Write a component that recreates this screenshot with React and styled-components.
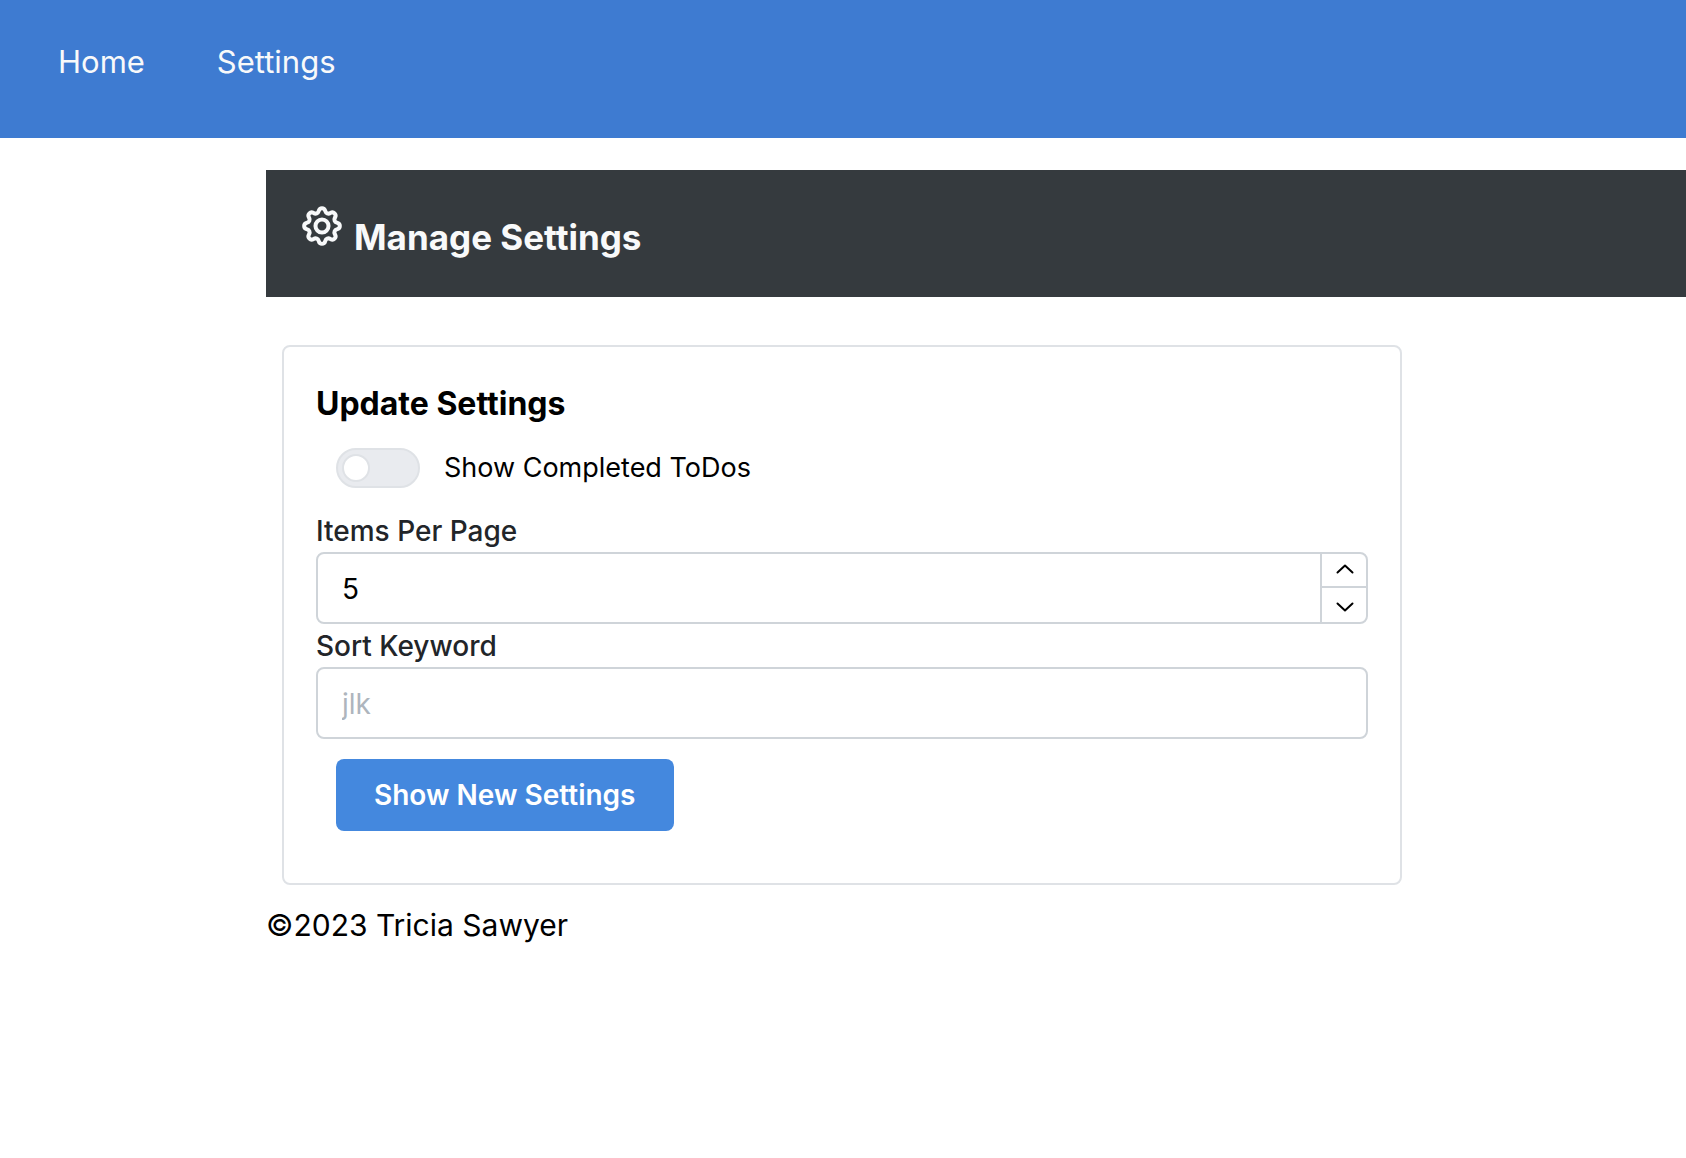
import React, { useState } from "react";
import styled, { createGlobalStyle } from "styled-components";
import { BsGear } from "react-icons/bs";

const GlobalStyle = createGlobalStyle`
  *, *::before, *::after { box-sizing: border-box; }
  body {
    margin: 0;
    background: #ffffff;
    color: #000000;
    font-family: Inter, "Liberation Sans", sans-serif;
    font-size: 30px;
    line-height: 48px;
  }
  button, input { font-family: inherit; }
`;

const Nav = styled.nav`
  display: flex;
  gap: 72px;
  padding: 38px 58px 52px;
  background: #3e7bd1;
  font-size: 31px;
`;

const NavLink = styled.a`
  color: #f8f9fa;
  text-decoration: none;
`;

const Page = styled.div`
  padding: 32px 0 32px 266px;
`;

const Banner = styled.header`
  display: flex;
  align-items: flex-start;
  gap: 12px;
  padding: 36px 36px 29px;
  background: #353a3e;
  color: #f8f9fa;
`;

const GearIcon = styled(BsGear)`
  width: 38px;
  height: 38px;
  margin: 1px;
  overflow: visible;
  stroke: currentColor;
  stroke-width: 0.7;
`;

const BannerTitle = styled.h1`
  margin: 0;
  font-size: 35px;
  font-weight: 700;
  line-height: 62px;
`;

const Card = styled.form`
  max-width: 1120px;
  margin: 48px 16px 16px;
  padding: 32px;
  border: 2px solid #dfe2e6;
  border-radius: 8px;
`;

const CardTitle = styled.h2`
  margin: 0;
  font-size: 32px;
  font-weight: 700;
  line-height: 50px;
`;

const SwitchRow = styled.div`
  display: flex;
  align-items: center;
  gap: 24px;
  margin: 19px 20px 21px;
  font-size: 27px;
  line-height: 40px;
`;

const Switch = styled.input`
  appearance: none;
  display: flex;
  align-items: center;
  width: 84px;
  height: 40px;
  margin: 0;
  padding: 0 4px;
  border: 2px solid #dfe2e6;
  border-radius: 20px;
  background: #e9ebef;

  &::before {
    content: "";
    width: 28px;
    height: 28px;
    border: 2px solid #dfe2e6;
    border-radius: 50%;
    background: #ffffff;
  }

  &:checked {
    justify-content: flex-end;
    border-color: #4488de;
    background: #4488de;
  }
`;

const Label = styled.label`
  display: block;
  padding-top: 1px;
  color: #222529;
  font-size: 28px;
  font-weight: 500;
  line-height: 42px;
`;

const Field = styled.div`
  display: flex;
  height: 72px;
  overflow: hidden;
  border: 2px solid #cfd4d9;
  border-radius: 8px;
`;

const Input = styled.input`
  flex: 1;
  min-width: 0;
  padding: 1px 24px 0;
  border: 0;
  outline: 0;
  background: transparent;
  color: #000000;
  font-size: 28px;
  appearance: textfield;

  &::placeholder { color: #aeb5bd; }
  &::-webkit-inner-spin-button { appearance: none; margin: 0; }
`;

const Stepper = styled.div`
  display: flex;
  flex-direction: column;
  width: 46px;
  border-left: 2px solid #cfd4d9;
`;

const StepButton = styled.button`
  display: flex;
  height: 34px;
  align-items: center;
  justify-content: center;
  padding: 3px 0 0 2px;
  border: 0;
  background: transparent;
  color: #000000;

  &:first-child {
    padding: 0 0 3px 2px;
    border-bottom: 2px solid #cfd4d9;
  }
`;

const SubmitButton = styled.button`
  display: block;
  height: 72px;
  margin: 20px;
  padding: 0 38px;
  border: 0;
  border-radius: 8px;
  background: #4488de;
  color: #ffffff;
  font-size: 28px;
  font-weight: 600;
`;

const Chevron = ({ up }) => (
  <svg width="18" height="10" viewBox="0 0 18 10" fill="none" stroke="currentColor" strokeWidth="2" strokeLinecap="round" strokeLinejoin="round" aria-hidden="true">
    <path d={up ? "M1.5 8.5 9 1.5l7.5 7" : "M1.5 1.5 9 8.5l7.5-7"} />
  </svg>
);

export default function App() {
  const [completed, setCompleted] = useState(false);
  const [items, setItems] = useState(5);
  return (
    <>
      <GlobalStyle />
      <Nav>
        <NavLink href="#home">Home</NavLink>
        <NavLink href="#settings">Settings</NavLink>
      </Nav>
      <Page>
        <Banner>
          <GearIcon aria-hidden="true" />
          <BannerTitle>Manage Settings</BannerTitle>
        </Banner>
        <Card onSubmit={(e) => e.preventDefault()}>
          <CardTitle>Update Settings</CardTitle>
          <SwitchRow>
            <Switch id="completed" type="checkbox" role="switch" checked={completed} onChange={(e) => setCompleted(e.target.checked)} />
            <label htmlFor="completed">Show Completed ToDos</label>
          </SwitchRow>
          <Label htmlFor="items">Items Per Page</Label>
          <Field>
            <Input id="items" type="number" value={items} onChange={(e) => setItems(Number(e.target.value))} />
            <Stepper>
              <StepButton type="button" aria-label="Increase" onClick={() => setItems(items + 1)}>
                <Chevron up />
              </StepButton>
              <StepButton type="button" aria-label="Decrease" onClick={() => setItems(items - 1)}>
                <Chevron />
              </StepButton>
            </Stepper>
          </Field>
          <Label htmlFor="keyword">Sort Keyword</Label>
          <Field>
            <Input id="keyword" type="text" placeholder="jlk" />
          </Field>
          <SubmitButton type="submit">Show New Settings</SubmitButton>
        </Card>
        <footer>©2023 Tricia Sawyer</footer>
      </Page>
    </>
  );
}
